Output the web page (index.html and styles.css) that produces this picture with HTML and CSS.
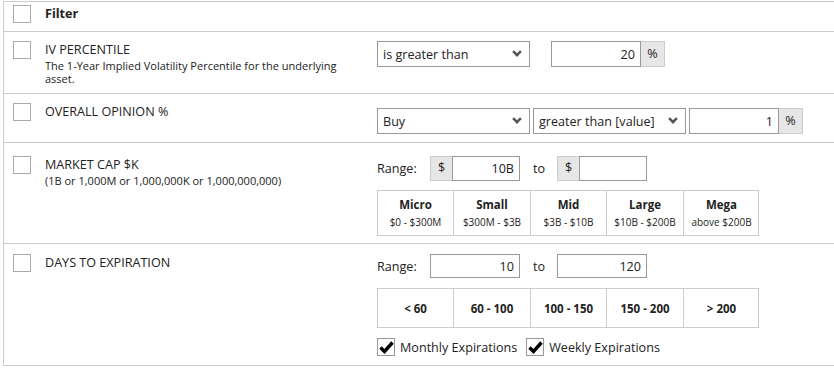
FILE: index.html
```html
<!DOCTYPE html>
<html lang="en">
<head>
    <meta charset="UTF-8">
    <meta name="viewport" content="width=device-width, initial-scale=1.0">
    <title>Screener Filters</title>
    <link rel="stylesheet" href="styles.css">
</head>
<body>
    <div class="filters">
        <!-- Header -->
        <div class="row row-head">
            <span class="box"></span>
            <div class="label"><b>Filter</b></div>
        </div>

        <!-- IV Percentile -->
        <div class="row row-iv">
            <span class="box"></span>
            <div class="label">
                <div class="title">IV PERCENTILE</div>
                <div class="desc">The 1-Year Implied Volatility Percentile for the underlying asset.</div>
            </div>
            <div class="controls">
                <div class="line">
                    <div class="select w153">is greater than <span class="arrow"></span></div>
                    <div class="group push">
                        <div class="input w90">20</div>
                        <div class="addon w24">%</div>
                    </div>
                </div>
            </div>
        </div>

        <!-- Overall Opinion -->
        <div class="row row-opinion">
            <span class="box"></span>
            <div class="label">
                <div class="title">OVERALL OPINION %</div>
            </div>
            <div class="controls">
                <div class="line tight">
                    <div class="select w153">Buy <span class="arrow"></span></div>
                    <div class="select w153">greater than [value] <span class="arrow"></span></div>
                    <div class="group">
                        <div class="input w90">1</div>
                        <div class="addon w24">%</div>
                    </div>
                </div>
            </div>
        </div>

        <!-- Market Cap -->
        <div class="row row-cap">
            <span class="box"></span>
            <div class="label">
                <div class="title">MARKET CAP $K</div>
                <div class="desc">(1B or 1,000M or 1,000,000K or 1,000,000,000)</div>
            </div>
            <div class="controls">
                <div class="line range">
                    <span class="range-label">Range:</span>
                    <div class="group">
                        <div class="addon w22">$</div>
                        <div class="input w68">10B</div>
                    </div>
                    <span class="to">to</span>
                    <div class="group">
                        <div class="addon w22">$</div>
                        <div class="input w68"></div>
                    </div>
                </div>
                <div class="segments cap">
                    <div class="seg"><b>Micro</b><span>$0 - $300M</span></div>
                    <div class="seg"><b>Small</b><span>$300M - $3B</span></div>
                    <div class="seg"><b>Mid</b><span>$3B - $10B</span></div>
                    <div class="seg"><b>Large</b><span>$10B - $200B</span></div>
                    <div class="seg"><b>Mega</b><span>above $200B</span></div>
                </div>
            </div>
        </div>

        <!-- Days to Expiration -->
        <div class="row row-days">
            <span class="box"></span>
            <div class="label">
                <div class="title">DAYS TO EXPIRATION</div>
            </div>
            <div class="controls">
                <div class="line range">
                    <span class="range-label">Range:</span>
                    <div class="input w90 short">10</div>
                    <span class="to">to</span>
                    <div class="input w90 short">120</div>
                </div>
                <div class="segments days">
                    <div class="seg"><b>&lt; 60</b></div>
                    <div class="seg"><b>60 - 100</b></div>
                    <div class="seg"><b>100 - 150</b></div>
                    <div class="seg"><b>150 - 200</b></div>
                    <div class="seg"><b>&gt; 200</b></div>
                </div>
                <div class="checks">
                    <label class="check">
                        <span class="box small">
                            <svg width="15" height="15" viewBox="0 0 15 15"><path d="M1.5 7.5 L5.5 11.5 L13.5 2.5" fill="none" stroke="#000" stroke-width="3.4"/></svg>
                        </span>
                        Monthly Expirations
                    </label>
                    <label class="check">
                        <span class="box small">
                            <svg width="15" height="15" viewBox="0 0 15 15"><path d="M1.5 7.5 L5.5 11.5 L13.5 2.5" fill="none" stroke="#000" stroke-width="3.4"/></svg>
                        </span>
                        Weekly Expirations
                    </label>
                </div>
            </div>
        </div>
    </div>
</body>
</html>
```

FILE: styles.css
```css
body {
    margin: 0;
    padding: 1px 0 0 3px;
    background: #fff;
    color: #222;
    font-family: "Open Sans", "Noto Sans", Arial, sans-serif;
    font-size: 12.6px;
}
.filters {
    border-left: 1px solid #ccc;
    border-top: 1px solid #ccc;
    width: 840px;
}
.row {
    display: grid;
    grid-template-columns: 18px 318px 1fr;
    column-gap: 14px;
    padding-left: 9px;
    border-bottom: 1px solid #ccc;
    align-items: start;
    box-sizing: border-box;
}
.row-head {
    height: 30px;
    padding-top: 3px;
}
.row-head .label {
    line-height: 18px;
}
.row-iv {
    height: 62px;
    padding-top: 9px;
}
.row-opinion {
    height: 49px;
    padding-top: 9px;
}
.row-opinion .controls {
    padding-top: 5px;
}
.row-cap {
    height: 101px;
    padding-top: 13px;
}
.row-days {
    height: 122px;
    padding-top: 10px;
}
.box {
    display: block;
    width: 18px;
    height: 18px;
    box-sizing: border-box;
    border: 1px solid #aaa;
    background: #fff;
}
.box.small {
    display: flex;
    align-items: center;
    justify-content: center;
    border-color: #999;
}
.label {
    line-height: 16px;
}
.title {
    line-height: 18px;
}
.desc {
    font-size: 11px;
    line-height: 13px;
    max-width: 300px;
}
.line {
    display: flex;
    align-items: center;
}
.line.tight {
    gap: 3px;
}
.push {
    margin-left: 21px;
}
.select {
    height: 26px;
    box-sizing: border-box;
    border: 1px solid #999;
    padding: 0 8px 0 5px;
    display: flex;
    align-items: center;
    justify-content: space-between;
}
.arrow {
    width: 8px;
    height: 8px;
    border-right: 3px solid #555;
    border-bottom: 3px solid #555;
    box-sizing: border-box;
    transform: rotate(45deg) scale(0.85);
    margin-top: -4px;
}
.w153 { width: 153px; }
.w90 { width: 90px; }
.w68 { width: 68px; }
.w24 { width: 24px; }
.w22 { width: 22px; }
.group {
    display: flex;
}
.input {
    height: 26px;
    box-sizing: border-box;
    border: 1px solid #999;
    padding: 0 5px;
    display: flex;
    align-items: center;
    justify-content: flex-end;
}
.addon {
    height: 26px;
    box-sizing: border-box;
    background: #e6e6e6;
    border: 1px solid #ccc;
    border-left: none;
    display: flex;
    align-items: center;
    justify-content: center;
    padding-bottom: 2px;
}
.range .addon {
    height: 25px;
    border-left: 1px solid #ccc;
    border-right: none;
}
.range .input {
    height: 25px;
}
.range .input.short {
    height: 24px;
}
.range-label {
    width: 53px;
}
.to {
    width: 24px;
    margin-left: 13px;
}
.segments {
    display: grid;
    grid-template-columns: 75px 77px 76px 77px 76px;
    width: 382px;
    box-sizing: border-box;
    border: 1px solid #ccc;
    margin-top: 9px;
}
.seg {
    border-left: 1px solid #ccc;
    display: flex;
    flex-direction: column;
    align-items: center;
    justify-content: center;
    text-align: center;
}
.seg:first-child {
    border-left: none;
}
.seg b {
    font-size: 11.5px;
}
.seg span {
    font-size: 10px;
    margin-top: 3px;
}
.cap .seg {
    height: 44px;
}
.days {
    margin-top: 10px;
}
.days .seg {
    height: 38px;
}
.checks {
    display: flex;
    gap: 9px;
    margin-top: 10px;
}
.check {
    display: flex;
    align-items: center;
    gap: 5px;
}
```
